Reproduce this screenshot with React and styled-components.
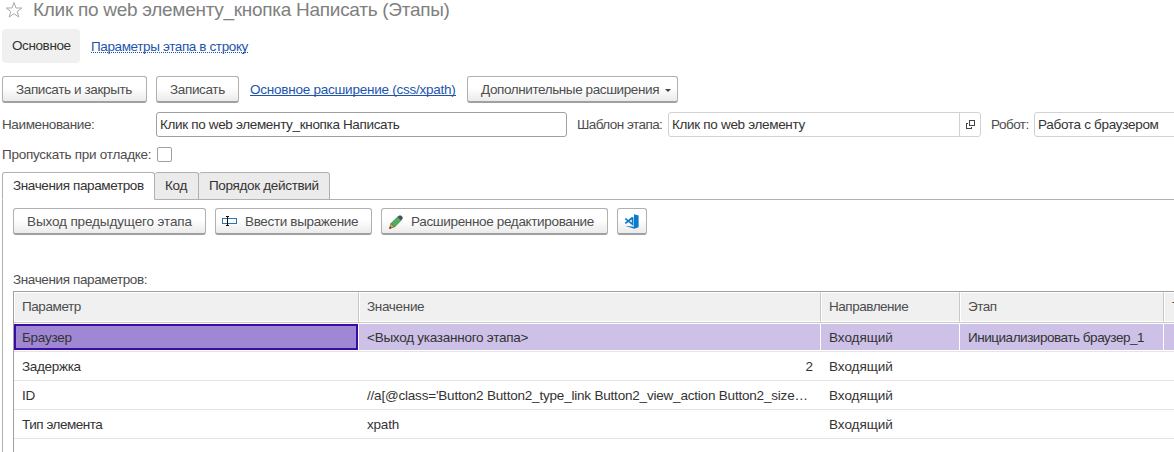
import React from 'react';
import styled, { createGlobalStyle, css } from 'styled-components';

const Global = createGlobalStyle`
  * { box-sizing: border-box; }
  html, body { margin: 0; padding: 0; background: #fff; }
  body {
    font: 13.5px/16px "Liberation Sans", Arial, sans-serif;
    color: #333;
    overflow: hidden;
  }
`;

const Window = styled.main`
  width: 1174px;
  height: 452px;
  overflow: hidden;
  display: flex;
  flex-direction: column;
  padding-left: 2px;
  white-space: nowrap;
`;

const TitleBar = styled.header`
  display: flex;
  align-items: center;
  height: 20px;
  padding-left: 3px;
  gap: 10px;
  margin-bottom: 9px;
`;

const Title = styled.h1`
  margin: 0;
  font-size: 19px;
  line-height: 20px;
  font-weight: 400;
  color: #808080;
  letter-spacing: ${(p) => p.$ls}px;
`;

const Label = styled.span`
  color: ${(p) => p.$color || '#4d4d4d'};
  letter-spacing: ${(p) => p.$ls || 0}px;
`;

const Nav = styled.nav`
  display: flex;
  align-items: center;
  gap: 11px;
  height: 34px;
  margin-bottom: 13px;
`;

const NavCurrent = styled.div`
  width: 78px;
  height: 34px;
  padding: 9px 0 0 10px;
  background: #f0f0f0;
  border-radius: 4px;
`;

const Link = styled.a`
  color: #1c55ae;
  line-height: 16px;
  height: 14px;
  letter-spacing: ${(p) => p.$ls || 0}px;
  border-bottom: 1px ${(p) => (p.$dotted ? 'dotted' : 'solid')} #1c55ae;
`;

const Toolbar = styled.div`
  display: flex;
  align-items: center;
  gap: 9px;
  height: 27px;
`;

const LinkSlot = styled.div`
  width: 210px;
  padding: 0 2px 1px;
  display: flex;
`;

const Button = styled.button`
  display: flex;
  align-items: center;
  width: ${(p) => p.$w}px;
  height: 27px;
  padding: 1px 0 0 ${(p) => p.$pl || 13}px;
  border: 1px solid #b0b0b0;
  border-bottom: 2px solid #a0a0a0;
  border-radius: 3px;
  background: linear-gradient(#fff 45%, #ebebeb);
  font: inherit;
  text-align: left;
  white-space: nowrap;
  flex: none;
`;

const ButtonIcon = styled.span`
  display: flex;
  flex: none;
  width: ${(p) => p.$w || 16}px;
`;

const Caret = styled.span`
  width: 0;
  margin-left: 6px;
  margin-top: 2px;
  border: 3px solid transparent;
  border-top-color: #444;
  border-bottom: 0;
`;

const Fields = styled.div`
  display: flex;
  align-items: center;
  height: 25px;
  margin-top: 9px;
`;

const FieldLabel = styled.label`
  width: ${(p) => p.$w}px;
  flex: none;
`;

const Input = styled.div`
  display: flex;
  align-items: center;
  width: ${(p) => p.$w}px;
  height: 25px;
  flex: none;
  padding-left: 3px;
  margin-right: 10px;
  border: 1px solid ${(p) => (p.$muted ? '#d2d2d2' : '#a0a0a0')};
  border-radius: 3px;
  background: #fff;
`;

const OpenButton = styled.span`
  display: flex;
  align-items: center;
  justify-content: center;
  width: 21px;
  height: 23px;
  margin-left: auto;
  border-left: 1px solid #d2d2d2;
`;

const CheckRow = styled.div`
  display: flex;
  align-items: center;
  height: 17px;
  margin-top: 9px;
`;

const Checkbox = styled.span`
  width: 15px;
  height: 15px;
  border: 1px solid #a0a0a0;
  border-radius: 2px;
`;

const Tabs = styled.div`
  display: flex;
  height: 28px;
  margin-top: 9px;
`;

const Tab = styled.div`
  width: ${(p) => p.$w}px;
  padding: 5px 0 0 10px;
  border: 1px solid #b0b0b0;
  border-left-width: ${(p) => (p.$first ? 1 : 0)}px;
  border-radius: 3px 3px 0 0;
  background: #ebebeb;
  ${(p) => p.$active && css`
    background: #fff;
    border-bottom-color: #fff;
  `}
`;

const TabFill = styled.div`
  flex: 1;
  border-bottom: 1px solid #b0b0b0;
`;

const Panel = styled.section`
  flex: 1;
  display: flex;
  flex-direction: column;
  border-left: 1px solid #b0b0b0;
  padding: 8px 0 0 10px;
`;

const TableCaption = styled.div`
  margin-top: 37px;
  height: 19px;
`;

const Table = styled.div`
  flex: 1;
  border: 1px solid #a0a0a0;
  border-width: 1px 0 0 1px;
`;

const columns = '345px 462px 139px 204px 30px';

const HeadRow = styled.div`
  display: grid;
  grid-template-columns: ${columns};
  height: 31px;
  border-bottom: 1px solid #c8c8c8;
`;

const HeadCell = styled.div`
  padding: 6px 0 0 7px;
  border: 1px solid #fff;
  border-right: 1px solid #c8c8c8;
  background: #f0f0f0;
`;

const Row = styled.div`
  display: grid;
  grid-template-columns: ${columns};
  height: 29px;
  border-bottom: 1px solid #e4e4e4;
  padding: 1px 0;
`;

const Cell = styled.div`
  padding: 6px 8px 0 8px;
  text-align: ${(p) => (p.$right ? 'right' : 'left')};
  ${(p) => p.$selected && css`
    background: #cdc1e8;
    border-right: 1px solid #fff;
  `}
  ${(p) => p.$focused && css`
    padding: 4px 0 0 6px;
    margin-right: 1px;
    background: #9f87d3;
    border: 2px solid #3b0ca3;
  `}
`;

const Star = () => (
  <svg width="18" height="18" viewBox="0 0 18 18" fill="none" stroke="#a9a9a9" strokeWidth="1">
    <path d="M9 1.5 L11 7 L16.8 7 L12.2 10.5 L13.8 16 L9 12.7 L4.2 16 L5.8 10.5 L1.2 7 L7 7 Z" />
  </svg>
);

const OpenIcon = () => (
  <svg width="9" height="9" viewBox="0 0 9 9" fill="none" stroke="#444" shapeRendering="crispEdges">
    <path d="M3.5 .5h5v5h-5zM2 3.5H.5v5h5V7" />
  </svg>
);

const InputIcon = () => (
  <svg width="15" height="11" viewBox="0 0 15 11" fill="none" shapeRendering="crispEdges">
    <rect x=".5" y="2.5" width="14" height="5" rx="1" stroke="#2f74a8" />
    <path d="M4 .5h3M5.5 .5v9M4 9.5h3" stroke="#111" />
  </svg>
);

const PencilIcon = () => (
  <svg width="14" height="14" viewBox="0 0 14 14">
    <path d="M.5 13.5 2 8.5 5.5 12z" fill="#f2a94b" stroke="#75583a" strokeWidth=".7" />
    <path d="M.3 13.7 1 11.4 2.6 13z" fill="#333" />
    <path d="M2 8.5 8.6 2 12 5.4 5.5 12z" fill="#4db05b" stroke="#35713e" strokeWidth=".7" />
    <path d="M8.6 2 10.2.5H12L13.6 2.1V3.8L12 5.4z" fill="#3e4f5c" />
  </svg>
);

const CodeIcon = () => (
  <svg width="15" height="15" viewBox="0 0 15 15">
    <path d="M10 .2 14.6 1.6V13.2L10.3 14.8 1 11.8 10 12.8z" fill="#0a7bcb" />
    <path d="M8.6 3.3v7L1.3 4.7M8.6 3.5 1.3 9.3" fill="none" stroke="#0a7bcb" strokeWidth="1.7" />
  </svg>
);

const rows = [
  { name: 'Браузер', value: '<Выход указанного этапа>', stage: 'Инициализировать браузер_1', selected: true, ls: [-0.25, -0.25] },
  { name: 'Задержка', value: '2', right: true, ls: [-0.32, 0] },
  { name: 'ID', value: "//a[@class='Button2 Button2_type_link Button2_view_action Button2_size…", ls: [-0.27, -0.2] },
  { name: 'Тип элемента', value: 'xpath', ls: [-0.47, -0.2] },
];

export default function App() {
  return (
    <>
      <Global />
      <Window>
        <TitleBar>
          <Star />
          <Title $ls={-0.28}>Клик по web элементу_кнопка Написать (Этапы)</Title>
        </TitleBar>
        <Nav>
          <NavCurrent><Label $color="#333" $ls={-0.4}>Основное</Label></NavCurrent>
          <Link $dotted $ls={-0.38}>Параметры этапа в строку</Link>
        </Nav>
        <Toolbar>
          <Button $w={145}><Label $ls={-0.38}>Записать и закрыть</Label></Button>
          <Button $w={83}><Label $ls={-0.35}>Записать</Label></Button>
          <LinkSlot><Link $ls={-0.24}>Основное расширение (css/xpath)</Link></LinkSlot>
          <Button $w={211}>
            <Label $ls={-0.4}>Дополнительные расширения</Label>
            <Caret />
          </Button>
        </Toolbar>
        <Fields>
          <FieldLabel $w={154}><Label $ls={-0.38}>Наименование:</Label></FieldLabel>
          <Input $w={411}><Label $color="#333" $ls={-0.34}>Клик по web элементу_кнопка Написать</Label></Input>
          <FieldLabel $w={91}><Label $ls={-0.55}>Шаблон этапа:</Label></FieldLabel>
          <Input $w={313} $muted>
            <Label $color="#333" $ls={-0.32}>Клик по web элементу</Label>
            <OpenButton><OpenIcon /></OpenButton>
          </Input>
          <FieldLabel $w={43}><Label $ls={-0.5}>Робот:</Label></FieldLabel>
          <Input $w={160} $muted><Label $color="#333" $ls={-0.3}>Работа с браузером</Label></Input>
        </Fields>
        <CheckRow>
          <FieldLabel $w={155}><Label $ls={-0.27}>Пропускать при отладке:</Label></FieldLabel>
          <Checkbox />
        </CheckRow>
        <Tabs>
          <Tab $w={153} $first $active><Label $color="#333" $ls={-0.38}>Значения параметров</Label></Tab>
          <Tab $w={44}><Label $color="#333" $ls={-0.3}>Код</Label></Tab>
          <Tab $w={131}><Label $color="#333" $ls={-0.33}>Порядок действий</Label></Tab>
          <TabFill />
        </Tabs>
        <Panel>
          <Toolbar>
            <Button $w={193}><Label $ls={-0.12}>Выход предыдущего этапа</Label></Button>
            <Button $w={157} $pl={6}><ButtonIcon $w={23}><InputIcon /></ButtonIcon><Label $ls={-0.35}>Ввести выражение</Label></Button>
            <Button $w={227} $pl={7}><ButtonIcon $w={22}><PencilIcon /></ButtonIcon><Label $ls={-0.34}>Расширенное редактирование</Label></Button>
            <Button $w={30} $pl={6}><CodeIcon /></Button>
          </Toolbar>
          <TableCaption><Label $ls={-0.38}>Значения параметров:</Label></TableCaption>
          <Table>
            <HeadRow>
              <HeadCell><Label $ls={-0.42}>Параметр</Label></HeadCell>
              <HeadCell><Label $ls={-0.32}>Значение</Label></HeadCell>
              <HeadCell><Label $ls={-0.47}>Направление</Label></HeadCell>
              <HeadCell><Label $ls={-0.47}>Этап</Label></HeadCell>
              <HeadCell><Label>Т</Label></HeadCell>
            </HeadRow>
            {rows.map((r) => (
              <Row key={r.name}>
                <Cell $selected={r.selected} $focused={r.selected}><Label $color="#333" $ls={r.ls[0]}>{r.name}</Label></Cell>
                <Cell $selected={r.selected} $right={r.right}><Label $color="#333" $ls={r.ls[1]}>{r.value}</Label></Cell>
                <Cell $selected={r.selected}><Label $color="#333" $ls={-0.02}>Входящий</Label></Cell>
                <Cell $selected={r.selected}><Label $color="#333" $ls={-0.47}>{r.stage}</Label></Cell>
                <Cell $selected={r.selected} />
              </Row>
            ))}
          </Table>
        </Panel>
      </Window>
    </>
  );
}
